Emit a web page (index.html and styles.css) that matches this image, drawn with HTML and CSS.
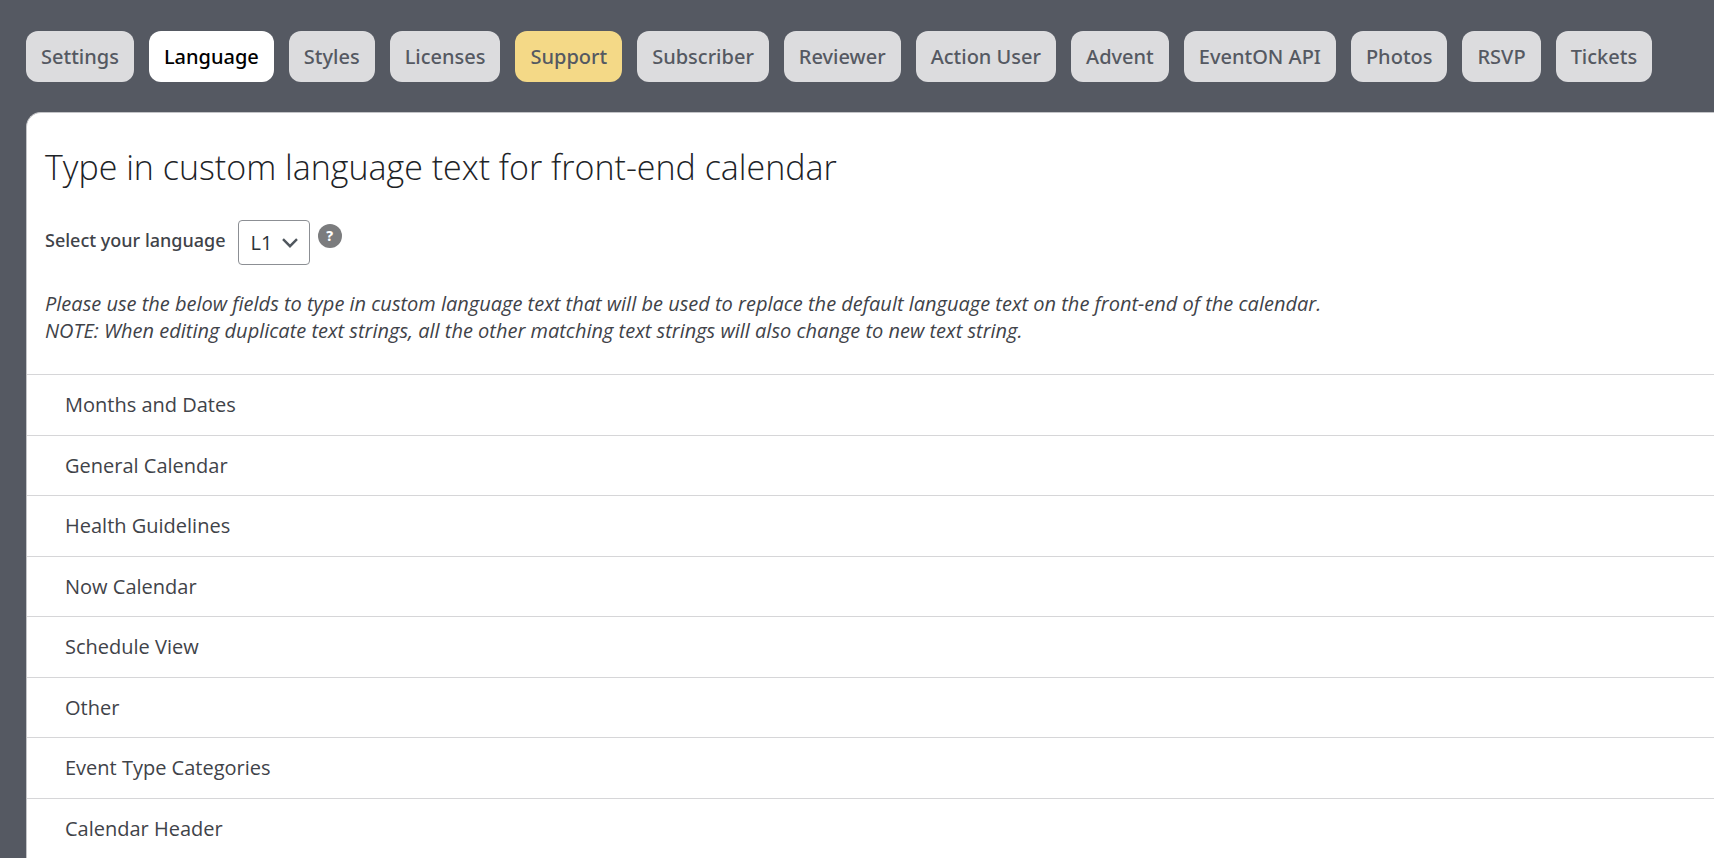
FILE: index.html
```html
<!DOCTYPE html>
<html lang="en">
<head>
  <meta charset="UTF-8" />
  <meta name="viewport" content="width=device-width, initial-scale=1" />
  <title>EventON | Language</title>
  <link rel="stylesheet" href="styles.css">
</head>
<body>
  <!-- Settings tabs -->
  <nav class="tabs">
    <a href="#settings" class="tab">Settings</a>
    <a href="#language" class="tab active">Language</a>
    <a href="#styles" class="tab">Styles</a>
    <a href="#licenses" class="tab">Licenses</a>
    <a href="#support" class="tab highlight">Support</a>
    <a href="#subscriber" class="tab">Subscriber</a>
    <a href="#reviewer" class="tab">Reviewer</a>
    <a href="#action-user" class="tab">Action User</a>
    <a href="#advent" class="tab">Advent</a>
    <a href="#api" class="tab">EventON API</a>
    <a href="#photos" class="tab">Photos</a>
    <a href="#rsvp" class="tab">RSVP</a>
    <a href="#tickets" class="tab">Tickets</a>
  </nav>

  <!-- Language panel -->
  <main class="panel">
    <div class="panel-intro">
      <h1>Type in custom language text for front-end calendar</h1>
      <div class="language-row">
        <label for="language">Select your language</label>
        <div class="select-wrap">
          <select id="language">
            <option>L1</option>
            <option>L2</option>
            <option>L3</option>
          </select>
          <svg class="chevron" viewBox="0 0 16 10" aria-hidden="true">
            <path d="M1 1.2l7 7 7-7" />
          </svg>
        </div>
        <button type="button" class="help">?</button>
      </div>
      <p class="note">
        Please use the below fields to type in custom language text that will be used to replace the default language text on the front-end of the calendar.<br>
        NOTE: When editing duplicate text strings, all the other matching text strings will also change to new text string.
      </p>
    </div>

    <div class="sections">
      <button type="button" class="section-btn">Months and Dates</button>
      <button type="button" class="section-btn">General Calendar</button>
      <button type="button" class="section-btn">Health Guidelines</button>
      <button type="button" class="section-btn">Now Calendar</button>
      <button type="button" class="section-btn">Schedule View</button>
      <button type="button" class="section-btn">Other</button>
      <button type="button" class="section-btn">Event Type Categories</button>
      <button type="button" class="section-btn">Calendar Header</button>
    </div>
  </main>
</body>
</html>
```

FILE: styles.css
```css
:root {
  --page-bg: #555962;
  --tab-bg: #dcdcde;
  --tab-text: #555962;
  --highlight: #f4d987;
  --border: #c3c4c7;
  --line: #d6d6d8;
  --text: #3f4349;
  --heading: #1d2327;
  --white: #fff;
}

* {
  margin: 0;
  padding: 0;
  box-sizing: border-box;
}

body {
  min-height: 100vh;
  display: flex;
  flex-direction: column;
  gap: 30px;
  padding: 31px 0 0 26px;
  background-color: var(--page-bg);
  color: var(--text);
  font-family: "Segoe UI", "Open Sans", sans-serif;
  font-size: 20px;
}

/* Tabs */
.tabs {
  display: flex;
  flex-wrap: wrap;
  gap: 15px;
}

.tab {
  padding: 1px 15px 0;
  border-radius: 12px;
  background-color: var(--tab-bg);
  color: var(--tab-text);
  font-family: "Segoe UI", "Noto Sans", sans-serif;
  line-height: 50px;
  font-weight: 500;
  text-decoration: none;
}

.tab.active {
  background-color: var(--white);
  color: #000;
}

.tab.highlight {
  background-color: var(--highlight);
}

/* Panel */
.panel {
  flex: 1;
  display: flex;
  flex-direction: column;
  border: 1px solid var(--border);
  border-width: 1px 0 0 1px;
  border-radius: 15px 0 0 0;
  background-color: var(--white);
}

.panel-intro {
  padding: 30px 18px;
}

.panel-intro h1 {
  color: var(--heading);
  font-size: 34px;
  font-weight: 300;
  line-height: 48px;
}

.language-row {
  display: flex;
  align-items: flex-start;
  margin-top: 29px;
}

.language-row label {
  margin-right: 12px;
  font-family: "Segoe UI", "Noto Sans", sans-serif;
  font-size: 18px;
  font-weight: 500;
  line-height: 40px;
}

.select-wrap {
  position: relative;
  margin-right: 8px;
}

.select-wrap select {
  display: block;
  width: 72px;
  height: 45px;
  padding: 0 12px;
  appearance: none;
  border: 1px solid #8c8f94;
  border-radius: 4px;
  background-color: var(--white);
  color: #2c3338;
  font: inherit;
}

.chevron {
  position: absolute;
  top: 18px;
  right: 12px;
  width: 16px;
  height: 10px;
  fill: none;
  stroke: #50575e;
  stroke-width: 2.4;
  pointer-events: none;
}

.help {
  width: 24px;
  height: 24px;
  margin-top: 4px;
  border: none;
  border-radius: 50%;
  background-color: #7b7c7e;
  color: var(--white);
  font-family: "Noto Sans", sans-serif;
  font-size: 14px;
  font-weight: 800;
  line-height: 24px;
  cursor: pointer;
}

.note {
  margin-top: 25px;
  font-style: italic;
  line-height: 27px;
}

/* Collapsible sections */
.sections {
  flex: 1;
  display: grid;
  grid-auto-rows: 1fr;
}

.section-btn {
  min-height: 60px;
  padding: 0 38px;
  border: none;
  border-top: 1px solid var(--line);
  background-color: var(--white);
  color: var(--text);
  font: inherit;
  text-align: left;
  cursor: pointer;
}
```
